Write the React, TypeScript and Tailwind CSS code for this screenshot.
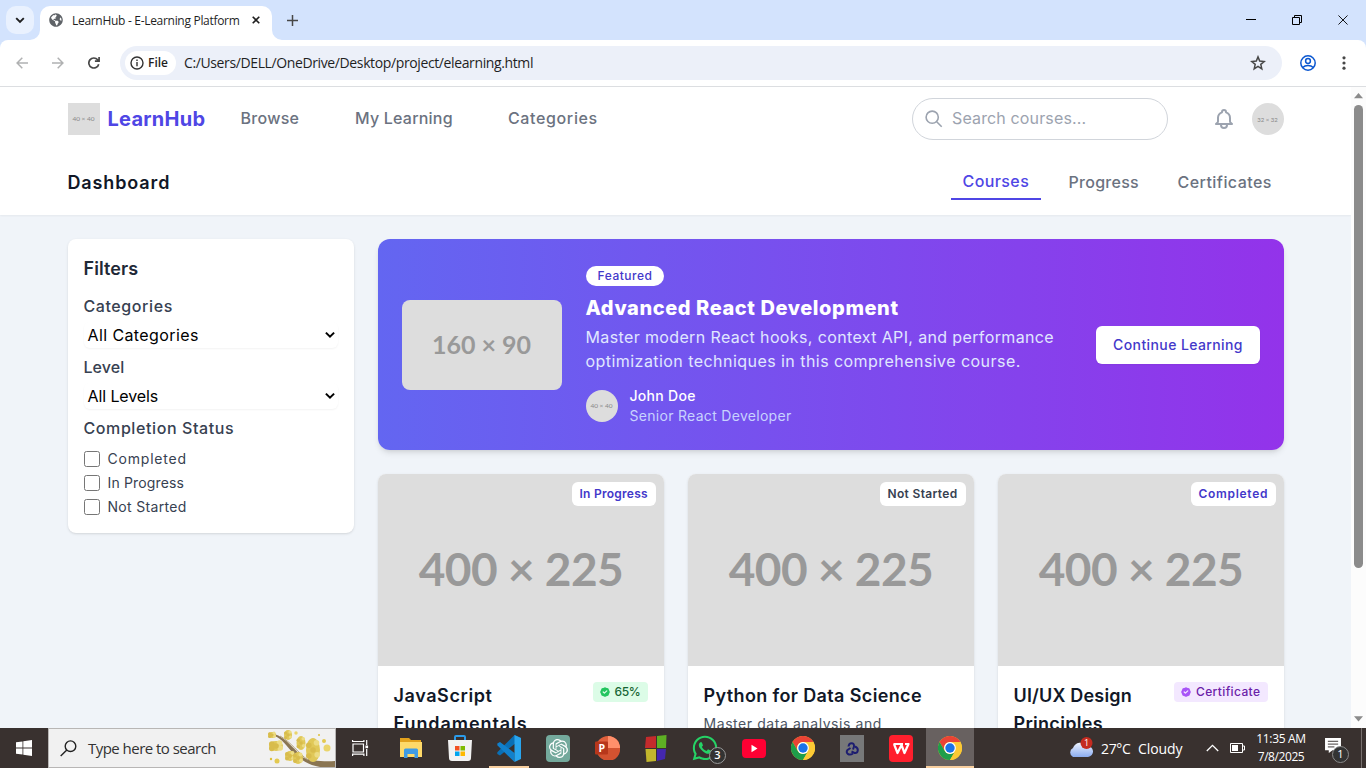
import type { ReactNode } from 'react';
import { FaWhatsapp, FaGlobeAmericas } from 'react-icons/fa';
import { SiOpenai } from 'react-icons/si';

function BrowserChrome() {
  return (
    <div className="shrink-0 bg-[#d3e3fd] font-['Open_Sans',sans-serif] text-[#1f1f1f]">
      <div className="flex h-10 items-end">
        <div className="mb-1.5 ml-1.5 flex h-7 w-7 items-center justify-center rounded-[10px] bg-[#e9f1fe]">
          <svg width="10" height="10" viewBox="0 0 10 10" fill="none" stroke="#1f1f1f" strokeWidth="1.9"><path d="M1.2 3.2 5 7l3.8-3.8" /></svg>
        </div>
        <div className="relative ml-1.5 flex h-[34px] w-[232px] items-center rounded-t-[10px] bg-white pl-[9px]">
          <svg className="absolute -left-2.5 bottom-0" width="10" height="10" viewBox="0 0 10 10"><path d="M10 0v10H0A10 10 0 0 0 10 0Z" fill="#fff" /></svg>
          <svg className="absolute -right-2.5 bottom-0" width="10" height="10" viewBox="0 0 10 10"><path d="M0 0v10h10A10 10 0 0 1 0 0Z" fill="#fff" /></svg>
          <FaGlobeAmericas size={14} color="#5f6368" className="mb-1.5" />
          <span className="mb-1 ml-2 w-[179px] whitespace-nowrap pl-[1px] text-[12px] tracking-[-0.3px]">LearnHub - E-Learning Platform</span>
          <svg className="mb-1.5 ml-[2px]" width="8" height="8" viewBox="0 0 9 9" stroke="#1f1f1f" strokeWidth="1.8"><path d="m.8.8 7.4 7.4M8.2.8.8 8.2" /></svg>
        </div>
        <svg className="mb-[14.5px] ml-[14.5px]" width="11" height="11" viewBox="0 0 11 11" stroke="#474747" strokeWidth="1.5"><path d="M5.5 0v11M0 5.5h11" /></svg>
        <div className="ml-auto mr-[18px] flex h-10 items-center gap-9 text-black">
          <svg width="10" height="10" viewBox="0 0 10 10" stroke="currentColor"><path d="M0 4.5h10" /></svg>
          <svg width="10" height="10" viewBox="0 0 10 10" fill="none" stroke="currentColor"><path d="M.5 2.5h7v7h-7zM2.5 2.5v-2h7v7h-2" /></svg>
          <svg width="10" height="10" viewBox="0 0 11 11" stroke="currentColor"><path d="m.5.5 10 10M10.5.5l-10 10" /></svg>
        </div>
      </div>
      <div className="flex h-[47px] items-center rounded-t-[8px] border-b border-[#dcdee1] bg-white">
        <svg className="ml-4" width="12" height="12" viewBox="0 0 12 12" fill="none" stroke="#b0b1b2" strokeWidth="1.5"><path d="M12 6H1M6.3.8 1.1 6l5.2 5.2" /></svg>
        <svg className="ml-6" width="12" height="12" viewBox="0 0 12 12" fill="none" stroke="#b0b1b2" strokeWidth="1.5"><path d="M0 6h11M5.7.8 10.9 6l-5.2 5.2" /></svg>
        <svg className="ml-6" width="12" height="12" viewBox="0 0 12 12" fill="none" stroke="#474747" strokeWidth="1.7"><path d="M10.7 7.2a5 5 0 1 1-1-4.4l1 1M11.1 0v4.2H6.9" /></svg>
        <div className="ml-5 flex h-[34px] w-[1162px] items-center rounded-full bg-[#ecf0f9] pl-[5px] pr-4">
          <div className="flex h-6 w-[51px] items-center rounded-full bg-white pl-[5px]">
            <svg width="14" height="14" viewBox="0 0 14 14" fill="none" stroke="#333" strokeWidth="1.4"><circle cx="7" cy="7" r="6" /><path d="M7 6v4.3M7 3.6v1.5" /></svg>
            <span className="ml-1 text-[12px] font-semibold">File</span>
          </div>
          <span className="ml-2 whitespace-nowrap pb-px text-[14px] tracking-[-0.38px]">C:/Users/DELL/OneDrive/Desktop/project/elearning.html</span>
          <svg className="ml-auto" width="16" height="16" viewBox="0 0 16 16" fill="none" stroke="#474747" strokeWidth="1.5"><path d="m8 1.9 1.7 4.2 4.5.4-3.4 2.9 1 4.4L8 11.4l-3.8 2.4 1-4.4-3.4-2.9 4.5-.4z" /></svg>
        </div>
        <svg className="ml-[18px]" width="16" height="16" viewBox="0 0 16 16" fill="none" stroke="#0b57d0" strokeWidth="1.5"><circle cx="8" cy="8" r="7.2" /><circle cx="8" cy="6" r="2.4" /><path d="M2.7 12.6c2.6-2.7 8-2.7 10.6 0" /></svg>
        <svg className="ml-[26px]" width="4" height="14" viewBox="0 0 4 14" fill="#474747"><circle cx="2" cy="1.8" r="1.6" /><circle cx="2" cy="7" r="1.6" /><circle cx="2" cy="12.2" r="1.6" /></svg>
      </div>
    </div>
  );
}

function SiteHeader() {
  return (
    <header className="relative bg-white shadow-xs">
      <div className="mx-auto max-w-7xl px-8">
        <div className="flex h-16 items-center">
          <div className="flex h-8 w-8 items-center justify-center whitespace-nowrap bg-[#ddd] font-['Lato',sans-serif] text-[6.5px] text-[#888]">40 × 40</div>
          <span className="ml-2 w-[133px] text-[20px] font-bold tracking-[0.25px] text-[#4f46e5]">LearnHub</span>
          <nav className="flex pb-0.5 text-[16px] font-medium text-[#6b7280]">
            <a className="w-[114.5px] tracking-[0.29px]">Browse</a>
            <a className="w-[153px] tracking-[0.21px]">My Learning</a>
            <a className="tracking-[0.63px]">Categories</a>
          </nav>
          <div className="ml-auto flex h-[42px] w-64 items-center rounded-full border border-[#d1d5db] pl-[12.5px] text-[#9ca3af]">
            <svg width="18" height="18" viewBox="0 0 18 18" fill="none" stroke="currentColor" strokeWidth="1.6"><circle cx="7.2" cy="7.2" r="6.1" /><path d="m11.7 11.7 5 5" /></svg>
            <span className="ml-[9px] pb-0.5 text-[16px] tracking-[0.14px]">Search courses...</span>
          </div>
          <svg className="ml-11 text-[#9ca3af]" width="24" height="24" viewBox="0 0 24 24" fill="none" stroke="currentColor" strokeWidth="2" strokeLinecap="round" strokeLinejoin="round"><path d="M15 17h5l-1.405-1.405A2.032 2.032 0 0118 14.158V11a6.002 6.002 0 00-4-5.659V5a2 2 0 10-4 0v.341C7.67 6.165 6 8.388 6 11v3.159c0 .538-.214 1.055-.595 1.436L4 17h5m6 0v1a3 3 0 11-6 0v-1m6 0H9" /></svg>
          <div className="ml-4 flex h-8 w-8 items-center justify-center whitespace-nowrap rounded-full bg-[#ddd] font-['Lato',sans-serif] text-[6px] text-[#888]">32 × 32</div>
        </div>
        <div className="flex h-16 items-center justify-between">
          <h1 className="text-[18px] font-semibold leading-7 tracking-[0.87px] text-[#111827]">Dashboard</h1>
          <nav className="flex gap-4 text-[16px] font-medium leading-6 text-[#6b7280]">
            <a className="h-[34px] w-[90px] border-b-2 border-[#4f46e5] pl-3 pt-[3px] tracking-[0.4px] text-[#4f46e5]">Courses</a>
            <a className="w-[93px] pl-3 pt-1 tracking-[0.28px]">Progress</a>
            <a className="w-[118px] pl-3 pt-1 tracking-[0.45px]">Certificates</a>
          </nav>
        </div>
      </div>
    </header>
  );
}

function SelectBox({ children }: { children: ReactNode }) {
  return (
    <div className="mt-[4px] flex h-[26px] items-center justify-between rounded-md pl-1 pr-[3px] text-[16px] text-black shadow-xs">
      {children}
      <svg width="10" height="8" viewBox="0 0 10 8" fill="none" stroke="#000" strokeWidth="2"><path d="M.9 1.6 5 5.7l4.1-4.1" /></svg>
    </div>
  );
}

function CheckRow({ children }: { children: ReactNode }) {
  return (
    <label className="flex h-5 items-center text-[14px] text-[#374151]">
      <input type="checkbox" className="h-4 w-4 appearance-none rounded-[2.5px] border border-[#767676] bg-white" />
      {children}
    </label>
  );
}

function Filters() {
  return (
    <aside className="h-[294px] rounded-lg bg-white p-4 text-[16px] font-medium leading-6 text-[#374151] shadow">
      <h2 className="mb-[11px] text-[18px] font-semibold leading-7 tracking-[0.1px] text-[#1f2937]">Filters</h2>
      <h3 className="tracking-[0.58px]">Categories</h3>
      <SelectBox><span className="font-normal tracking-[0.4px]">All Categories</span></SelectBox>
      <h3 className="mt-[7px] tracking-[0.05px]">Level</h3>
      <SelectBox><span className="font-normal tracking-[-0.1px]">All Levels</span></SelectBox>
      <h3 className="mt-[7px] tracking-[0.59px]">Completion Status</h3>
      <div className="mt-[9px] flex flex-col gap-1 font-normal">
        <CheckRow><span className="ml-2 tracking-[0.8px]">Completed</span></CheckRow>
        <CheckRow><span className="ml-2 tracking-[0.16px]">In Progress</span></CheckRow>
        <CheckRow><span className="ml-2 tracking-[0.32px]">Not Started</span></CheckRow>
      </div>
    </aside>
  );
}

function FeaturedBanner() {
  return (
    <section className="flex h-[211px] items-center rounded-xl bg-linear-to-r/srgb from-[#6366f1] to-[#9333ea] px-6 text-white shadow-md">
      <div className="flex h-[90px] w-40 shrink-0 items-center justify-center rounded-lg bg-[#ddd] font-['Lato',sans-serif] text-[25px] font-bold text-[#999]">160 × 90</div>
      <div className="ml-6 h-[163px] flex-1 whitespace-nowrap">
        <div className="mt-[3px] flex h-5 w-[78px] items-center justify-center rounded-full bg-white pl-px text-[12px] font-medium tracking-[0.5px] text-[#4338ca]">Featured</div>
        <h2 className="mt-2 text-[20px] font-extrabold leading-7 tracking-[0.58px]">Advanced React Development</h2>
        <p className="mt-[3px] text-[16px] leading-6 text-[#e0e7ff]">
          <span className="block tracking-[0.37px]">Master modern React hooks, context API, and performance</span>
          <span className="block tracking-[0.45px]">optimization techniques in this comprehensive course.</span>
        </p>
        <div className="mt-[13px] flex items-center text-[14px] leading-5">
          <div className="flex h-8 w-8 items-center justify-center rounded-full bg-[#ddd] font-['Lato',sans-serif] text-[6.5px] text-[#888]">40 × 40</div>
          <div className="ml-3">
            <div className="font-medium tracking-[0.3px]">John Doe</div>
            <div className="tracking-[0.3px] text-[#c7d2fe]">Senior React Developer</div>
          </div>
        </div>
      </div>
      <button className="h-[38px] w-[164px] rounded-md bg-white pl-px text-[14px] font-medium tracking-[0.4px] text-[#4338ca] shadow-xs">Continue Learning</button>
    </section>
  );
}

function CourseCard({ badge, children }: { badge: ReactNode; children: ReactNode }) {
  return (
    <article className="h-[360px] overflow-hidden rounded-lg bg-white shadow">
      <div className="relative flex h-48 items-center justify-center bg-[#ddd] pb-[3px] pl-px font-['Lato',sans-serif] text-[46px] font-bold tracking-[-0.5px] text-[#999]">
        400 × 225
        <div className="absolute right-2 top-2 flex font-['Inter',sans-serif] text-[12px] font-semibold leading-4">{badge}</div>
      </div>
      <div className="p-4">{children}</div>
    </article>
  );
}

function Seal({ className }: { className: string }) {
  return (
    <svg className={className} width="12" height="12" viewBox="0 0 20 20" fill="currentColor"><path fillRule="evenodd" clipRule="evenodd" d="M6.267 3.455a3.066 3.066 0 001.745-.723 3.066 3.066 0 013.976 0 3.066 3.066 0 001.745.723 3.066 3.066 0 012.812 2.812c.051.643.304 1.254.723 1.745a3.066 3.066 0 010 3.976 3.066 3.066 0 00-.723 1.745 3.066 3.066 0 01-2.812 2.812 3.066 3.066 0 00-1.745.723 3.066 3.066 0 01-3.976 0 3.066 3.066 0 00-1.745-.723 3.066 3.066 0 01-2.812-2.812 3.066 3.066 0 00-.723-1.745 3.066 3.066 0 010-3.976 3.066 3.066 0 00.723-1.745 3.066 3.066 0 012.812-2.812zm7.44 5.252a1 1 0 00-1.414-1.414L9 10.586 7.707 9.293a1 1 0 00-1.414 1.414l2 2a1 1 0 001.414 0l4-4z" /></svg>
  );
}

function Courses() {
  return (
    <div className="mt-6 grid grid-cols-3 gap-6">
      <CourseCard badge={<span className="w-[84px] rounded-md bg-white py-1 pl-2 tracking-[0.26px] text-[#4338ca]">In Progress</span>}>
        <div className="flex items-start justify-between">
          <h3 className="text-[18px] font-semibold leading-7 text-[#111827]"><span className="block tracking-[0.6px]">JavaScript</span><span className="block tracking-[0.94px]">Fundamentals</span></h3>
          <span className="flex h-5 w-[55px] items-center rounded bg-[#dcfce7] pl-1.5 text-[12px] font-medium tracking-[-0.35px] text-[#166534]"><Seal className="mr-1 text-[#22c55e]" />65%</span>
        </div>
      </CourseCard>
      <CourseCard badge={<span className="w-[86px] rounded-md bg-white py-1 pl-2 tracking-[0.34px] text-[#374151]">Not Started</span>}>
        <h3 className="text-[18px] font-semibold leading-7 tracking-[0.37px] text-[#111827]">Python for Data Science</h3>
        <p className="mt-1 text-[14px] leading-5 tracking-[0.57px] text-[#4b5563]">Master data analysis and</p>
      </CourseCard>
      <CourseCard badge={<span className="w-[85px] rounded-md bg-white py-1 pl-2 tracking-[0.69px] text-[#4338ca]">Completed</span>}>
        <div className="flex items-start justify-between">
          <h3 className="text-[18px] font-semibold leading-7 text-[#111827]"><span className="block tracking-[0.18px]">UI/UX Design</span><span className="block tracking-[0.3px]">Principles</span></h3>
          <span className="flex h-5 w-[94px] items-center rounded bg-[#f3e8ff] pl-1.5 text-[12px] font-medium tracking-[0.37px] text-[#6b21a8]"><Seal className="mr-[4.5px] text-[#a855f7]" />Certificate</span>
        </div>
      </CourseCard>
    </div>
  );
}

function Scrollbar() {
  return (
    <div className="flex w-[15px] shrink-0 flex-col items-center bg-[#fcfcfc]">
      <svg className="mt-1.5" width="9" height="6" viewBox="0 0 9 6" fill="#8b8b8b"><path d="M4.5 0 9 5.2H0z" /></svg>
      <div className="mt-1.5 h-[463px] w-[9px] rounded-full bg-[#8b8b8b]" />
      <svg className="mb-[6px] mt-auto" width="9" height="6" viewBox="0 0 9 6" fill="#8b8b8b"><path d="M4.5 5.5 0 .3h9z" /></svg>
    </div>
  );
}

function ChromeLogo() {
  return (
    <svg width="24" height="24" viewBox="0 0 24 24">
      <circle cx="12" cy="12" r="12" fill="#fcc934" />
      <path d="M1.6 6A12 12 0 0 1 22.4 6H12a6 6 0 0 0-5.2 9z" fill="#ea4335" />
      <path d="M1.6 6A12 12 0 0 0 12 24l5.2-9A6 6 0 0 1 6.8 15z" fill="#1e9e4a" />
      <path d="M22.4 6H12a6 6 0 0 1 5.2 9L12 24A12 12 0 0 0 22.4 6Z" fill="#fcc934" />
      <circle cx="12" cy="12" r="5.9" fill="#fff" /><circle cx="12" cy="12" r="4.7" fill="#1a73e8" />
    </svg>
  );
}

function Mimosa() {
  const clusters = [[4, 6, 4, 3], [20, 6, 4, 5], [8, 17, 7, 5], [33, 14, 4.5, 7], [22, 27, 5, 5], [30, 29, 5, 6], [45, 21, 7, 12]];
  return (
    <svg width="67" height="38" viewBox="0 0 67 38">
      <path d="M6 5c12 3 20 16 30 24 6 2 18 4 31 3v6H52C40 36 34 31 27 26 19 18 14 9 6 7z" fill="#8a7552" />
      <path d="M12 7c11 6 19 18 28 24" fill="none" stroke="#b6a47b" />
      <path d="m43 32 1-8" stroke="#78623d" strokeWidth="2" />
      {clusters.map(([x, y, rx, ry], i) => (
        <g key={i}>
          <ellipse cx={x} cy={y} rx={rx} ry={ry} fill="#e0c858" />
          {[[-.6, -.4], [.5, -.6], [-.6, .5], [.6, .4], [0, 0]].map(([a, b], j) => <circle key={j} cx={x + a * rx} cy={y + b * ry} r={rx * .4} fill={j % 2 ? '#ecdc84' : '#d8bc4c'} />)}
        </g>
      ))}
      <circle cx="59" cy="19" r="3.5" fill="#ead56b" /><circle cx="56" cy="12" r="2" fill="#e3c950" /><circle cx="9" cy="32" r="2.5" fill="#e3c950" /><circle cx="28" cy="4" r="1.7" fill="#ead56b" /><circle cx="3" cy="30" r="1.2" fill="#dcc03a" /><circle cx="51" cy="6" r="1" fill="#dcc03a" />
    </svg>
  );
}

function Cell({ children, className = '' }: { children: ReactNode; className?: string }) {
  return <div className={'relative flex h-10 w-12 shrink-0 items-center justify-center ' + className}>{children}</div>;
}

function Taskbar() {
  return (
    <footer className="flex h-10 shrink-0 items-center bg-[#39312f] font-['Open_Sans',sans-serif] text-white">
      <div className="flex w-12 justify-center">
        <svg width="16" height="16" viewBox="0 0 16 16" fill="#fff"><path d="M0 2.3 6.5 1.4v6.1H0zM7.3 1.3 16 0v7.5H7.3zM0 8.4h6.5v6.2L0 13.7zM7.3 8.4H16V16l-8.7-1.3z" /></svg>
      </div>
      <div className="flex h-10 w-72 items-center border border-[#b8b6b5] bg-[#f1f1f1] pl-[11px] text-[#333]">
        <svg width="17" height="17" viewBox="0 0 17 17" fill="none" stroke="#222" strokeWidth="1.4"><circle cx="10.5" cy="6.2" r="5.3" /><path d="M6.8 10 .7 16.1" /></svg>
        <span className="ml-[11px] whitespace-nowrap text-[15px] tracking-[-0.53px]">Type here to search</span>
        <div className="ml-auto"><Mimosa /></div>
      </div>
      <div className="mr-[2px] flex w-12 justify-center">
        <svg width="17" height="16" viewBox="0 0 17 16" fill="none" stroke="#fff" strokeWidth="1.2"><path d="M1 4h10.5v8H1zM.6 0v1.5h11.3V0M.6 16v-1.8h11.3V16M14.7 0v5M14.7 9v7" /><path d="M13.4 5.5h2.7v2.7h-2.7z" fill="#fff" stroke="none" /></svg>
      </div>
      <div className="ml-px flex gap-px">
        <Cell>
          <svg width="22" height="20" viewBox="0 0 22 20"><path d="M0 0h9l2 2h10v5H0z" fill="#e2a11c" /><path d="M0 4h22v15H0z" fill="#fed969" /><path d="M4 20v-8q0-1.5 1.5-1.5h11Q18 10.5 18 12v8h-3.5v-4h-7v4z" fill="#3f9be4" /></svg>
        </Cell>
        <Cell>
          <svg width="24" height="26" viewBox="0 0 24 26"><path d="M7 6V2q0-1 1-1h8q1 0 1 1v4" fill="none" stroke="#2b9bea" strokeWidth="2" /><path d="M0 5h24l-1 18q0 3-3 3H4q-3 0-3-3z" fill="#f2f2f2" /><path d="M7 11h4.5v4.5H7z" fill="#f25022" /><path d="M12.5 11H17v4.5h-4.5z" fill="#7fba00" /><path d="M7 16.5h4.5V21H7z" fill="#00a4ef" /><path d="M12.5 16.5H17V21h-4.5z" fill="#ffb900" /></svg>
        </Cell>
        <Cell>
          <svg width="24" height="27" viewBox="0 0 24 27"><path d="M17.5 0 24 3v6h-6.5L3 20.5.3 19v-1.8z" fill="#0a6fb5" /><path d="M17.5 27 .3 10.3V8.5L3 7l14.5 11z" fill="#1180cc" /><path d="m17.5 0 6.5 3v21l-6.5 3z" fill="#29a5ee" /></svg>
          <span className="absolute bottom-0 left-1 h-0.5 w-10 bg-[#f8cf9f]" />
        </Cell>
        <Cell><div className="flex h-[27px] w-6 items-center justify-center rounded bg-[#74a99c]"><SiOpenai size={19} color="#fff" /></div></Cell>
        <Cell>
          <svg width="25" height="24" viewBox="0 0 25 24"><circle cx="13" cy="12" r="12" fill="#e0603c" /><path d="M13 0a12 12 0 0 1 12 12H13z" fill="#ff8f6b" /><path d="M2 15a11.6 11.6 0 0 0 23-3H13z" fill="#d35230" /><rect x="0" y="5.5" width="13" height="13" rx="1" fill="#b7371b" /><text x="3.5" y="16" fill="#fff" fontSize="10.5" fontWeight="700" fontFamily="Open Sans, sans-serif">P</text></svg>
        </Cell>
        <Cell>
          <svg width="22" height="27" viewBox="0 0 22 27"><path d="m1 2 10-1v12H0z" fill="#c42b2c" /><path d="m12 1 9.5-1-.5 13h-9z" fill="#5eb024" /><path d="M.5 14H11v12L1.5 27z" fill="#c2b62c" /><path d="M12 14h9l-1 10-8 2z" fill="#4427ae" /></svg>
        </Cell>
        <Cell>
          <FaWhatsapp size={28} color="#25d366" />
          <span className="absolute left-[28px] top-[19px] flex h-[17px] w-[17px] items-center justify-center rounded-full border border-[#999] bg-[#333] text-[11px] font-semibold">3</span>
        </Cell>
        <Cell>
          <svg width="24" height="19" viewBox="0 0 24 18" preserveAspectRatio="none"><rect width="24" height="18" rx="4" fill="#ff0033" /><path d="m9.5 5.5 6 3.5-6 3.5z" fill="#fff" /></svg>
        </Cell>
        <Cell><ChromeLogo /></Cell>
        <Cell>
          <svg width="24" height="27" viewBox="0 0 24 27"><path d="M0 0h24v27H0z" fill="#777879" /><g fill="none" stroke="#1d1d70" strokeWidth="2"><path d="M8.5 11.5C9 7 14.5 7 14 11.5l-1 3" /><path d="M15 11.5c4.500 2 3 7-.5 6.500l-3-1.500" /><path d="M13 18.500c-4 2.500-8-.5-5.500-3.500l3-2" /></g></svg>
        </Cell>
        <Cell>
          <svg width="24" height="27" viewBox="0 0 24 27"><rect width="24" height="27" rx="4" fill="#ff1f2d" /><path d="M4.500 9H14M5 9l3.500 9 4-8 3 8L19.500 9H16" fill="none" stroke="#fff" strokeWidth="2.200" strokeLinejoin="round" /></svg>
        </Cell>
        <Cell className="bg-[#686160]"><ChromeLogo /><span className="absolute bottom-0 left-0 h-0.5 w-12 bg-[#f8cf9f]" /></Cell>
      </div>
      <svg className="mb-px ml-[94px]" width="25" height="21" viewBox="0 0 25 21"><defs><linearGradient id="cloud" x2="0" y2="1"><stop stopColor="#edf3ff" /><stop offset="1" stopColor="#8bacf0" /></linearGradient></defs><path d="M5 20a5 5 0 0 1 0-9 8 8 0 0 1 14-2 5.500 5.500 0 0 1 1 11z" fill="url(#cloud)" /><circle cx="18.500" cy="6" r="6" fill="#c52b20" /><text x="16" y="9.300" fill="#fff" fontSize="9" fontFamily="Open Sans, sans-serif">1</text></svg>
      <span className="ml-2 w-[37px] whitespace-nowrap text-[14px] tracking-[-0.35px]">27°C</span>
      <span className="w-[68px] text-[14px] tracking-[-0.1px]">Cloudy</span>
      <svg width="13" height="8" viewBox="0 0 13 8" fill="none" stroke="#fff" strokeWidth="1.300"><path d="m.8 7 5.700-5.700L12.200 7" /></svg>
      <svg className="ml-[11px]" width="15" height="10" viewBox="0 0 15 10" fill="none" stroke="#fff"><path d="M.5.5h12v9H.5zM12.500 3h2v4h-2" /><path d="M2 2h6v6H2z" fill="#fff" stroke="none" /></svg>
      <div className="ml-[9px] w-[54px] text-center text-[12px] leading-[18px]">
        <div className="whitespace-nowrap tracking-[-0.32px]">11:35 AM</div>
        <div className="tracking-[-0.42px]">7/8/2025</div>
      </div>
      <div className="relative ml-[17px] mt-1 h-[22px] w-[26px]">
        <svg className="-mt-px" width="16" height="15" viewBox="0 0 17 16"><path d="M0 0h17v13H8l-4 3v-3H0z" fill="#fff" /><path d="M3 3.500h11M3 6.500h11M3 9.500h7" stroke="#39312f" /></svg>
        <span className="absolute left-[7px] top-[7px] flex h-[17px] w-[17px] items-center justify-center rounded-full border border-[#8b8b8b] bg-[#333] text-[11px]">1</span>
      </div>
      <div className="ml-auto mr-1 h-10 w-px bg-[#77706e]" />
    </footer>
  );
}

export default function App() {
  return (
    <div className="flex h-[768px] w-[1366px] flex-col overflow-hidden">
      <BrowserChrome />
      <div className="flex min-h-0 flex-1">
        <div className="min-w-0 flex-1 overflow-hidden bg-[#f0f4f9] font-['Inter',sans-serif]">
          <SiteHeader />
          <main className="mx-auto grid max-w-7xl grid-cols-4 items-start gap-6 px-8 pt-6">
            <Filters />
            <div className="col-span-3">
              <FeaturedBanner />
              <Courses />
            </div>
          </main>
        </div>
        <Scrollbar />
      </div>
      <Taskbar />
    </div>
  );
}
